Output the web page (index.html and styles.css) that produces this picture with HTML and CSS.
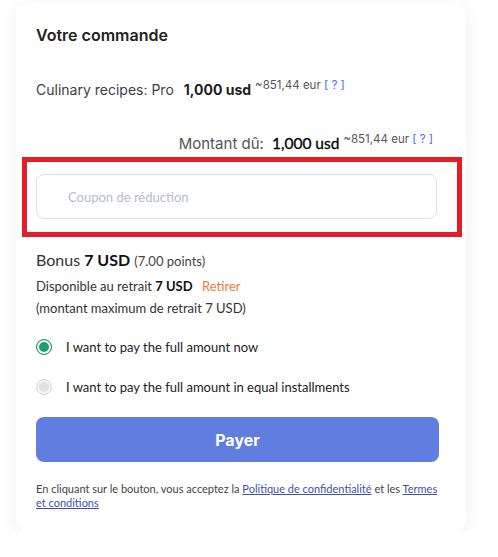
FILE: index.html
```html
<!DOCTYPE html>
<html lang="fr">
<head>
<meta charset="utf-8">
<link rel="stylesheet" href="styles.css">
</head>
<body>
<div class="card">
  <h2 class="title">Votre commande</h2>
  <div class="item-row">
    <span class="item-name">Culinary recipes: Pro</span>
    <span class="item-price">1,000 usd</span>
    <span class="approx">~851,44 eur <span class="help">[ ? ]</span></span>
  </div>
  <div class="total-row">
    <span class="total-label">Montant dû:</span>
    <span class="total-price">1,000 usd</span>
    <span class="approx">~851,44 eur <span class="help">[ ? ]</span></span>
  </div>
  <div class="highlight">
    <input class="coupon" type="text" placeholder="Coupon de réduction">
  </div>
  <div class="bonus">
    <div class="bonus-title">Bonus <b>7 USD</b> <span class="points">(7.00 points)</span></div>
    <div class="bonus-line">Disponible au retrait <b>7 USD</b> <a class="withdraw">Retirer</a></div>
    <div class="bonus-line">(montant maximum de retrait 7 USD)</div>
  </div>
  <div class="options">
    <label class="option"><span class="radio checked"></span>I want to pay the full amount now</label>
    <label class="option"><span class="radio"></span>I want to pay the full amount in equal installments</label>
  </div>
  <button class="pay">Payer</button>
  <p class="terms">En cliquant sur le bouton, vous acceptez la <a>Politique de confidentialité</a> et les <a>Termes et conditions</a></p>
</div>
</body>
</html>
```

FILE: styles.css
```css
html, body {
  margin: 0;
  padding: 0;
  background: #ffffff;
}

.card {
  width: 450px;
  margin: 3px 0 0 16px;
  box-sizing: border-box;
  padding: 22px 27px 21px 20px;
  background: #ffffff;
  border-radius: 12px;
  box-shadow: 0 4px 18px rgba(40, 60, 120, 0.08);
  font-family: Lato, "Liberation Sans", sans-serif;
  color: #333;
}

.title {
  margin: 0;
  font-family: Inter, sans-serif;
  font-size: 16px;
  font-weight: 600;
  line-height: 20px;
  color: #222;
}

.item-row {
  display: flex;
  align-items: baseline;
  margin-top: 34px;
  font-family: Inter, sans-serif;
  line-height: 22px;
}

.item-name {
  font-size: 14px;
  color: #3d3d48;
  margin-right: 10px;
}

.item-price {
  font-size: 14px;
  font-weight: 700;
  color: #222;
  margin-right: 4px;
}

.approx {
  font-family: Inter, sans-serif;
  font-size: 11.5px;
  color: #555;
  position: relative;
  top: -6px;
}

.help {
  color: #4a6cf0;
}

.total-row {
  display: flex;
  align-items: baseline;
  justify-content: flex-end;
  margin-top: 29px;
  padding-right: 6px;
  line-height: 24px;
}

.total-label {
  font-family: Inter, sans-serif;
  font-size: 15px;
  color: #555;
  margin-right: 8px;
}

.total-price {
  font-family: Lato, sans-serif;
  font-size: 15.5px;
  font-weight: 400;
  -webkit-text-stroke: 0.3px #000;
  color: #000;
  margin-right: 4px;
}

.highlight {
  margin: 0 -23px 0 -14px;
  padding: 12px 20px 13px 9px;
  border: 5px solid #e41e26;
}

.coupon {
  display: block;
  width: 100%;
  height: 45px;
  box-sizing: border-box;
  border: 1px solid #dcdff0;
  border-radius: 8px;
  padding: 0 0 0 31px;
  font-family: Lato, sans-serif;
  font-size: 13px;
  color: #333;
  outline: none;
}

.coupon::placeholder {
  color: #b4bcd6;
}

.bonus {
  margin-top: 11px;
}

.bonus-title {
  font-size: 16px;
  line-height: 24px;
  margin-bottom: 2px;
  color: #333;
}

.bonus-title b {
  color: #111;
}

.points {
  font-size: 13px;
  color: #444;
}

.bonus-line {
  font-size: 13px;
  line-height: 22px;
  color: #333;
}

.bonus-line b {
  color: #111;
}

.withdraw {
  color: #f5773e;
  margin-left: 6px;
}

.options {
  margin-top: 17px;
  display: flex;
  flex-direction: column;
  gap: 18px;
}

.option {
  display: flex;
  align-items: center;
  gap: 14px;
  font-size: 13px;
  line-height: 22px;
  color: #222;
}

.radio {
  width: 16px;
  height: 16px;
  box-sizing: border-box;
  border-radius: 50%;
  border: 1px solid #d8d8d8;
  background: #e2e2e2;
  box-shadow: inset 0 0 0 2px #f4f4f4;
  flex-shrink: 0;
}

.radio.checked {
  border: 1.5px solid #1f9d6f;
  background: #1f9d6f;
  box-shadow: inset 0 0 0 2px #ffffff;
}

.pay {
  display: block;
  width: 100%;
  height: 45px;
  margin-top: 19px;
  border: none;
  border-radius: 8px;
  background: #617ddf;
  color: #ffffff;
  font-family: Inter, sans-serif;
  font-size: 16px;
  font-weight: 700;
}

.terms {
  margin: 20px 0 0;
  font-size: 11px;
  line-height: 14px;
  color: #444;
}

.terms a {
  color: #3f4fae;
  text-decoration: underline;
}
```
